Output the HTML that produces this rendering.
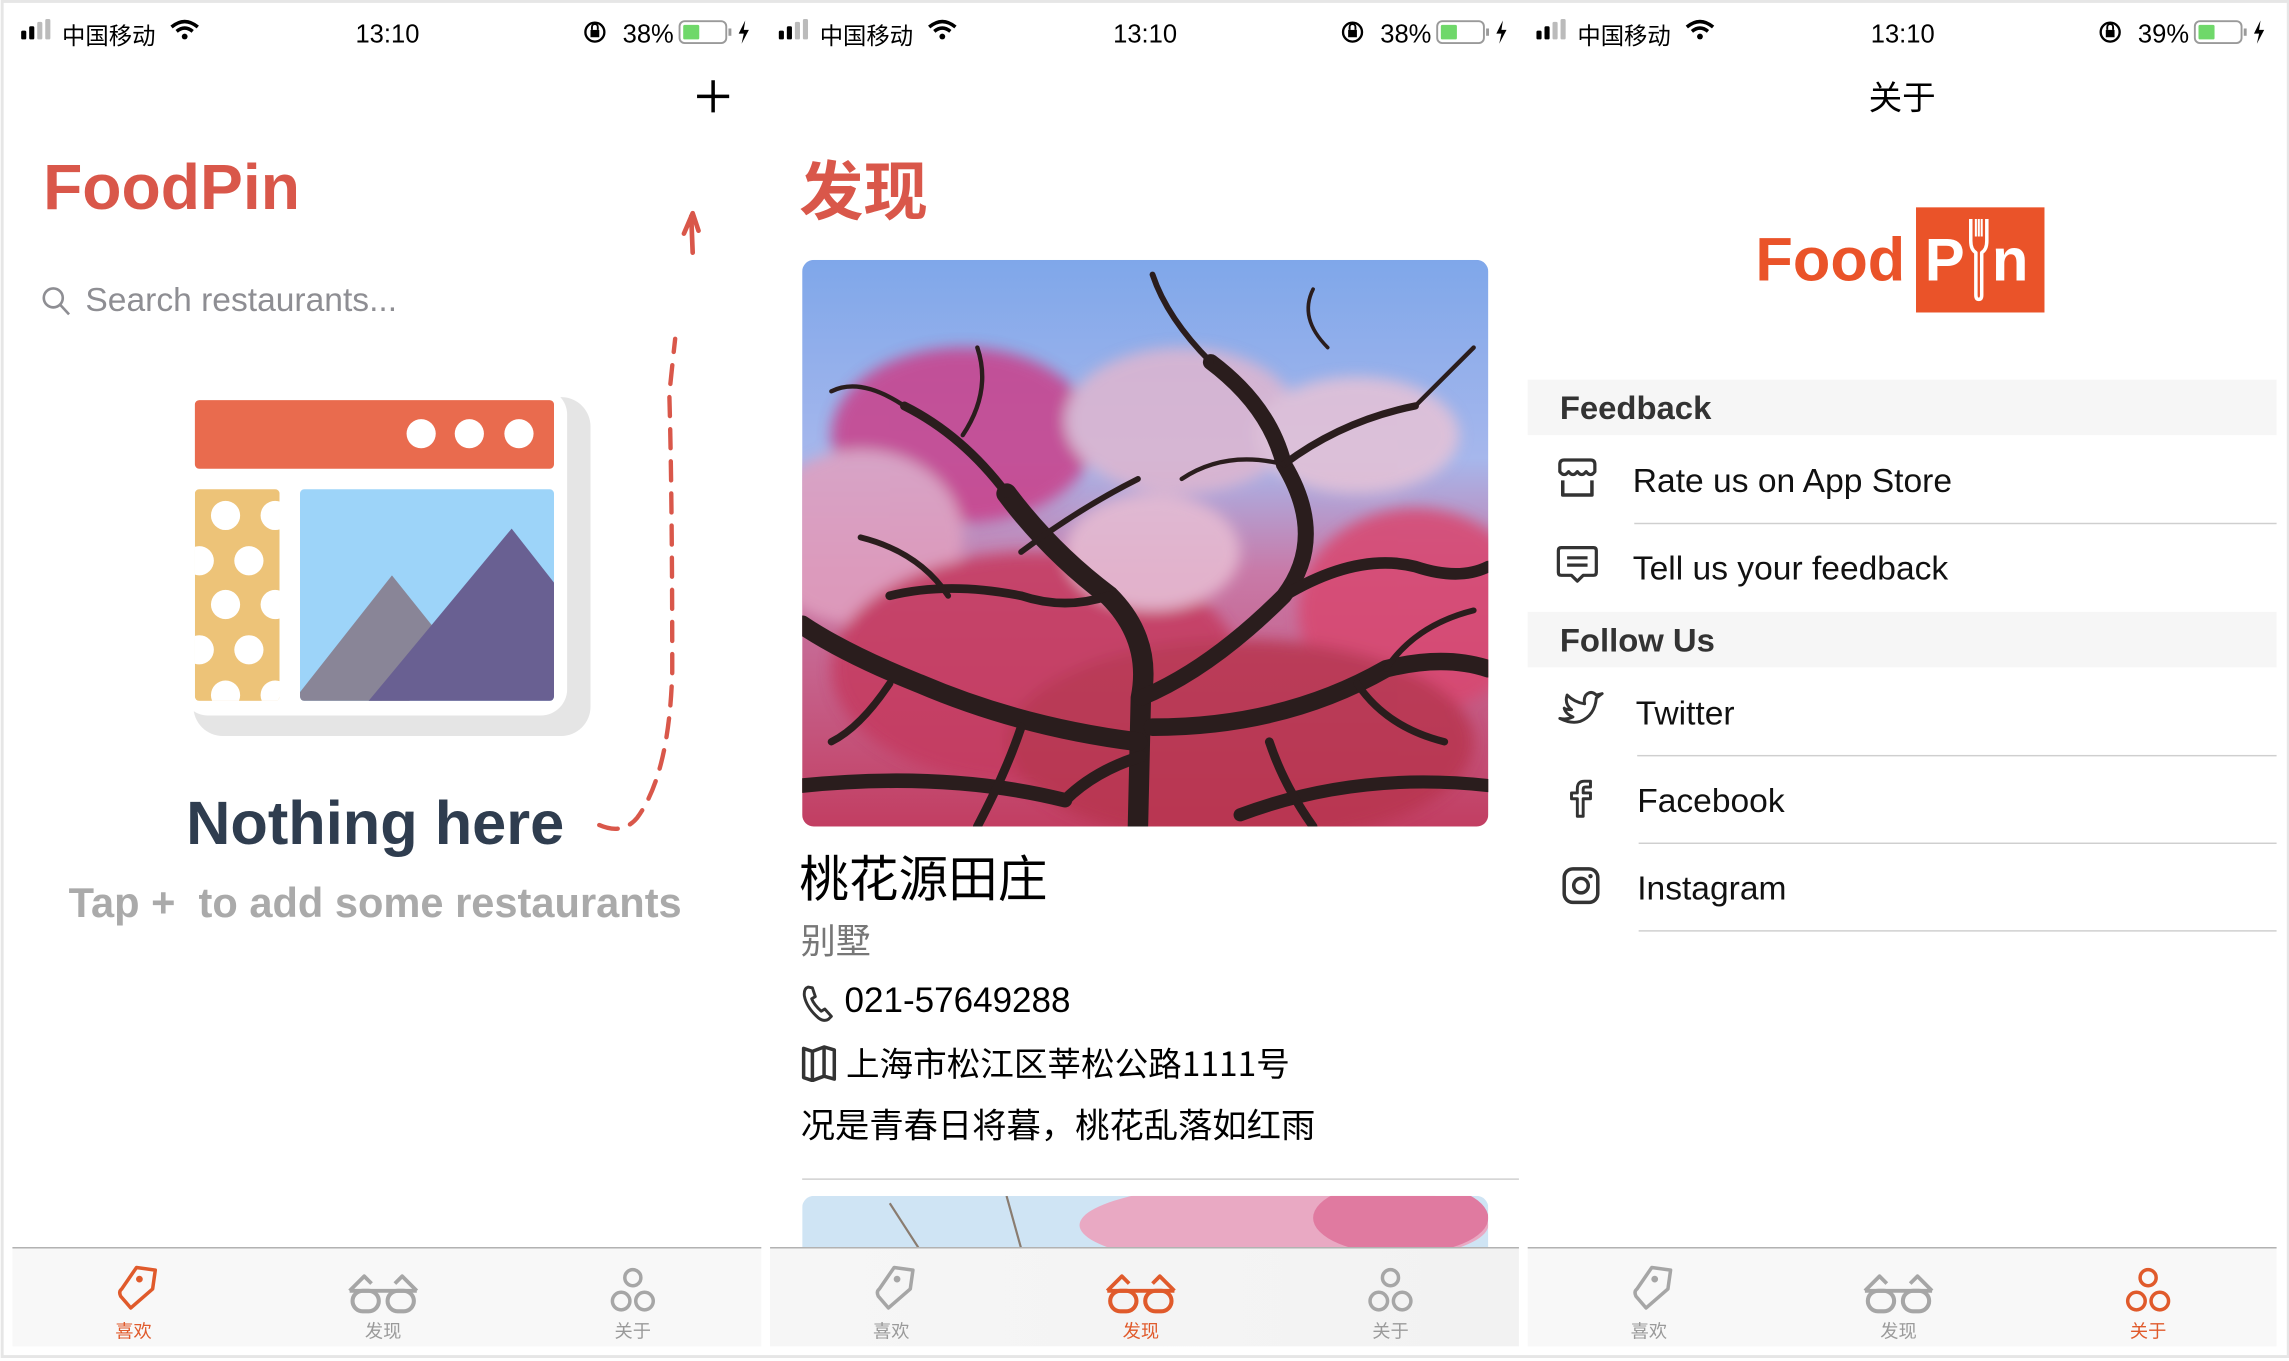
<!DOCTYPE html>
<html><head><meta charset="utf-8">
<style>
*{margin:0;padding:0;box-sizing:border-box}
html,body{width:2289px;height:1358px;overflow:hidden;background:#fff}
#w{position:absolute;left:0;top:0;width:1568px;height:930px;transform:scale(1.45982,1.46022) translate(0.5px,2px);transform-origin:0 0;font-family:"Liberation Sans","Noto Sans CJK SC",sans-serif;color:#000}
#bd{position:absolute;left:-0.5px;top:-2px;width:1568px;height:930px;border:2px solid #e6e6e6}
.a{position:absolute;white-space:nowrap}
.sb{font-size:16px;line-height:18px;top:12px}
.tab{position:absolute;top:852px;height:68px;background:#f8f8f8;border-top:1.5px solid #b0b0b0}
.tl{position:absolute;top:902px;font-size:12.5px;line-height:14px;width:40px;text-align:center;color:#9a9a9a}
.hd{position:absolute;left:1046px;width:513px;height:38px;background:#f6f6f6}
.ht{font-size:22.5px;font-weight:bold;color:#333;left:1068px}
.rt{font-size:23px;color:#111;line-height:26px}
.sep{position:absolute;height:1px;background:#cfcfcf;right:9px}
.cn{font-family:"Noto Sans CJK SC","Liberation Sans",sans-serif}
</style></head><body><div id="w">
<div id="bd"></div>

<svg class="a" style="left:-2px;top:-2px" width="1568" height="40">
<g id="sbi">
<rect x="16" y="21" width="3.5" height="6" rx="1" fill="#000"/><rect x="21.5" y="18" width="3.5" height="9" rx="1" fill="#000"/><rect x="27" y="15" width="3.5" height="12" rx="1" fill="#bbb"/><rect x="32.5" y="13" width="3.5" height="14" rx="1" fill="#bbb"/>
<path d="M119 18.5 Q128 11 137 18.5" stroke="#000" stroke-width="2.4" fill="none"/><path d="M122.5 21.5 Q128 17 133.5 21.5" stroke="#000" stroke-width="2.4" fill="none"/><circle cx="128" cy="25" r="2" fill="#000"/>
<circle cx="409" cy="22" r="6.5" stroke="#000" stroke-width="1.6" fill="none"/><rect x="406" y="20.5" width="6" height="5" fill="#000"/><path d="M407 20.5v-2a2 2 0 014 0v2" stroke="#000" stroke-width="1.3" fill="none"/>
<rect x="467" y="14.5" width="32" height="15" rx="3.5" stroke="#9a9a9a" stroke-width="1.3" fill="none"/><rect x="469.5" y="17" width="11" height="10" rx="1" fill="#6fd86a"/><rect x="500.5" y="19.5" width="2" height="5" fill="#9a9a9a"/>
<path d="M512 14 L507.5 23 H511 L509.5 30 L514.5 20.5 H511 Z" fill="#000"/>
</g>
<use href="#sbi" x="519"/><use href="#sbi" x="1038"/>
</svg>
<div class="a sb cn" style="left:42px">中国移动</div><div class="a sb" style="left:243px;font-size:17.5px">13:10</div><div class="a sb" style="left:426px;font-size:17.5px">38%</div>
<div class="a sb cn" style="left:561px">中国移动</div><div class="a sb" style="left:762px;font-size:17.5px">13:10</div><div class="a sb" style="left:945px;font-size:17.5px">38%</div>
<div class="a sb cn" style="left:1080px">中国移动</div><div class="a sb" style="left:1281px;font-size:17.5px">13:10</div><div class="a sb" style="left:1464px;font-size:17.5px">39%</div>

<!-- LEFT -->
<svg class="a" style="left:474px;top:50px" width="28" height="28"><path d="M14 3v22M3 14h22" stroke="#000" stroke-width="2.4"/></svg>
<div class="a" style="left:29px;top:101px;font-size:44px;line-height:52px;font-weight:bold;color:#d9574a">FoodPin</div>
<svg class="a" style="left:27px;top:193px" width="24" height="24"><circle cx="9" cy="9" r="6.5" stroke="#8e8e93" stroke-width="1.8" fill="none"/><path d="M13.8 13.8l6 6.5" stroke="#8e8e93" stroke-width="1.8"/></svg>
<div class="a" style="left:58px;top:189px;font-size:23px;line-height:28px;color:#8e8e93">Search restaurants...</div>

<svg class="a" style="left:118px;top:260px" width="300" height="250">
<rect x="14" y="10" width="272" height="232" rx="20" fill="#e5e5e5"/>
<rect x="6" y="4" width="264" height="224" rx="18" fill="#fff"/>
<rect x="15" y="12" width="246" height="47" rx="3" fill="#e96b4e"/>
<circle cx="170" cy="35" r="10" fill="#fff"/><circle cx="203" cy="35" r="10" fill="#fff"/><circle cx="237" cy="35" r="10" fill="#fff"/>
<clipPath id="yc"><rect x="15" y="73" width="58" height="145" rx="3"/></clipPath>
<g clip-path="url(#yc)"><rect x="15" y="73" width="58" height="145" fill="#edc378"/>
<g fill="#fff"><circle cx="36" cy="91" r="10"/><circle cx="70" cy="91" r="10"/><circle cx="18" cy="122" r="10"/><circle cx="52" cy="122" r="10"/><circle cx="36" cy="152" r="10"/><circle cx="70" cy="152" r="10"/><circle cx="18" cy="183" r="10"/><circle cx="52" cy="183" r="10"/><circle cx="36" cy="214" r="10"/><circle cx="70" cy="214" r="10"/></g></g>
<clipPath id="bc"><rect x="87" y="73" width="174" height="145" rx="3"/></clipPath>
<g clip-path="url(#bc)"><rect x="87" y="73" width="174" height="145" fill="#9dd4f9"/>
<path d="M87 212 L150 132 L182 172 L162 218 H87Z" fill="#898597"/>
<path d="M134 218 L232 100 L261 137 V218Z" fill="#696092"/></g>
</svg>

<svg class="a" style="left:398px;top:138px" width="90" height="440">
<path d="M12 425 Q28 432 38 420 Q60 390 62 320 Q62 200 60 130 Q62 110 64 92" stroke="#d9574a" stroke-width="3" fill="none" stroke-dasharray="13 9" stroke-linecap="round"/>
<path d="M76 33 L75 8 M70 20 L76 6 L80 18" stroke="#d9574a" stroke-width="3.2" fill="none" stroke-linecap="round" stroke-linejoin="round"/>
</svg>
<div class="a" style="left:0;width:513px;text-align:center;top:537px;font-size:42px;line-height:50px;font-weight:bold;color:#2f3d4f">Nothing here</div>
<div class="a" style="left:0;width:513px;text-align:center;top:600px;font-size:28.5px;line-height:34px;font-weight:bold;color:#aaa">Tap +&nbsp; to add some restaurants</div>

<!-- MIDDLE -->
<div class="a cn" style="left:547px;top:98px;font-size:44px;line-height:56px;font-weight:bold;color:#d9574a">发现</div>
<svg class="a" style="left:549px;top:176px" width="470" height="388">
<defs><clipPath id="pc"><rect width="470" height="388" rx="8"/></clipPath>
<linearGradient id="sky" x1="0" y1="0" x2="0" y2="1"><stop offset="0" stop-color="#7fa7ea"/><stop offset="0.35" stop-color="#a6b7ec"/><stop offset="0.55" stop-color="#c87aa8"/><stop offset="1" stop-color="#c23e62"/></linearGradient>
<filter id="bl"><feGaussianBlur stdDeviation="5"/></filter></defs>
<g clip-path="url(#pc)">
<rect width="470" height="388" fill="url(#sky)"/>
<g filter="url(#bl)" opacity="0.85">
<ellipse cx="110" cy="120" rx="90" ry="60" fill="#c9408a"/>
<ellipse cx="40" cy="190" rx="70" ry="60" fill="#e0a0c0"/>
<ellipse cx="260" cy="110" rx="80" ry="50" fill="#dfb6cf"/>
<ellipse cx="380" cy="120" rx="70" ry="40" fill="#e6c2d6"/>
<ellipse cx="420" cy="240" rx="80" ry="70" fill="#d84670"/>
<ellipse cx="160" cy="280" rx="140" ry="80" fill="#c53a60"/>
<ellipse cx="300" cy="330" rx="160" ry="70" fill="#b8344f"/>
<ellipse cx="240" cy="200" rx="60" ry="40" fill="#e7bdd3"/>
</g>
<g stroke="#2a1d1d" fill="none" stroke-linecap="round">
<path d="M230 388 L232 300 Q240 260 210 230 Q170 200 140 160" stroke-width="14"/>
<path d="M232 300 Q280 280 330 230 Q360 190 330 140 Q320 100 280 70" stroke-width="11"/>
<path d="M230 330 Q150 320 80 290 Q30 270 0 250" stroke-width="13"/>
<path d="M240 320 Q330 320 400 280 Q440 270 470 280" stroke-width="12"/>
<path d="M140 160 Q110 120 70 100" stroke-width="6"/>
<path d="M330 230 Q380 200 420 210 Q450 220 470 210" stroke-width="8"/>
<path d="M210 230 Q180 240 150 230 Q100 220 60 230" stroke-width="6"/>
<path d="M330 140 Q370 110 420 100" stroke-width="5"/>
<path d="M280 70 Q250 40 240 10" stroke-width="4"/>
<path d="M0 360 Q100 350 180 370" stroke-width="10"/>
<path d="M300 380 Q380 350 470 360" stroke-width="9"/>
<path d="M150 200 Q190 170 230 150" stroke-width="4"/>
<path d="M420 100 Q440 80 460 60" stroke-width="3"/>
<path d="M70 100 Q40 80 20 90" stroke-width="3"/>
<path d="M100 230 Q80 200 40 190" stroke-width="4"/>
<path d="M60 290 Q40 320 20 330" stroke-width="5"/>
<path d="M380 290 Q400 320 440 330" stroke-width="5"/>
<path d="M400 280 Q420 250 460 240" stroke-width="4"/>
<path d="M330 140 Q290 130 260 150" stroke-width="3"/>
<path d="M110 120 Q130 90 120 60" stroke-width="3"/>
<path d="M360 60 Q340 40 350 20" stroke-width="2.5"/>
<path d="M180 370 Q200 350 232 340" stroke-width="8"/>
<path d="M150 320 Q140 350 120 388" stroke-width="6"/>
<path d="M320 330 Q330 360 350 388" stroke-width="6"/>
</g>
</g></svg>
<div class="a cn" style="left:547px;top:576px;font-size:34px;line-height:44px">桃花源田庄</div>
<div class="a cn" style="left:548px;top:625px;font-size:24px;line-height:32px;color:#777">别墅</div>
<svg class="a" style="left:548px;top:671px" width="24" height="28"><path d="M5 3 Q2 4 2.5 9 Q4 17 12 24 Q16 27 19 25 L21 23 L16.5 18 L14 19.5 Q9 15 7.5 11 L10 9.5 L8 3.5Z" stroke="#333" stroke-width="2" fill="none" stroke-linejoin="round"/></svg>
<div class="a" style="left:578px;top:670px;font-size:24px;line-height:28px">021-57649288</div>
<svg class="a" style="left:548px;top:713px" width="26" height="26"><path d="M2 3 L8 5 L16 2 L23 4 V24 L16 22 L8 25 L2 23Z" stroke="#333" stroke-width="2.4" fill="none" stroke-linejoin="round"/><path d="M8 5V25M16 2V22" stroke="#333" stroke-width="2.4"/></svg>
<div class="a cn" style="left:579px;top:710px;font-size:23px;line-height:30px">上海市松江区莘松公路1111号</div>
<div class="a cn" style="left:548px;top:752px;font-size:23.5px;line-height:30px">况是青春日将暮，桃花乱落如红雨</div>
<div class="a" style="left:549px;top:805px;width:491px;height:1px;background:#cfcfcf"></div>
<svg class="a" style="left:549px;top:817px" width="470" height="35"><defs><clipPath id="p2"><rect width="470" height="60" rx="8"/></clipPath></defs><g clip-path="url(#p2)"><rect width="470" height="36" fill="#cfe4f4"/><ellipse cx="330" cy="20" rx="140" ry="30" fill="#e9a9c3"/><ellipse cx="410" cy="15" rx="60" ry="25" fill="#e07aa0"/><path d="M60 5 L80 36 M140 0 L150 36" stroke="#8a7c70" stroke-width="1.5"/></g></svg>

<!-- RIGHT -->
<div class="a cn" style="left:1046px;width:513px;text-align:center;top:49px;font-size:23px;line-height:28px">关于</div>
<div class="a" style="left:1202px;top:151px;font-size:42px;line-height:50px;font-weight:bold;color:#ea5329">Food</div>
<div class="a" style="left:1312px;top:140px;width:88px;height:72px;background:#ea5329"></div>
<div class="a" style="left:1318px;top:151px;font-size:41px;line-height:50px;font-weight:bold;color:#fff">P</div>
<div class="a" style="left:1364px;top:151px;font-size:41px;line-height:50px;font-weight:bold;color:#fff">n</div>
<svg class="a" style="left:1346px;top:145px" width="18" height="62"><path d="M3.5 3 V18 Q3.5 24 7 26 V55 Q7 58 9 58 Q11 58 11 55 V26 Q14.5 24 14.5 18 V3" stroke="#fff" stroke-width="2.4" fill="none" stroke-linejoin="round"/><path d="M7 3V15M9 3V15M11 3V15" stroke="#fff" stroke-width="1.4"/></svg>

<div class="hd" style="top:258px"></div>
<div class="a ht" style="top:265px;line-height:26px">Feedback</div>
<svg class="a" style="left:1064px;top:310px" width="34" height="32"><path d="M4 11 V6 Q4 3 7 3 H25 Q28 3 28 6 V11 Q25 15 22 11 Q19 15 16 11 Q13 15 10 11 Q7 15 4 11Z" stroke="#333" stroke-width="2.2" fill="none" stroke-linejoin="round"/><path d="M6 17 V27 H26 V17" stroke="#333" stroke-width="2.4" fill="none" stroke-linejoin="round"/></svg>
<div class="a rt" style="left:1118px;top:314px">Rate us on App Store</div>
<div class="sep" style="left:1119px;top:356px"></div>
<svg class="a" style="left:1064px;top:370px" width="34" height="32"><path d="M5 3 H27 Q29 3 29 5 V20 Q29 22 27 22 H20 L16 26 L12 22 H5 Q3 22 3 20 V5 Q3 3 5 3Z" stroke="#333" stroke-width="2.2" fill="none" stroke-linejoin="round"/><path d="M9 10H23M9 15H23" stroke="#333" stroke-width="2.2"/></svg>
<div class="a rt" style="left:1118px;top:374px">Tell us your feedback</div>
<div class="hd" style="top:417px"></div>
<div class="a ht" style="top:424px;line-height:26px">Follow Us</div>
<svg class="a" style="left:1066px;top:470px" width="34" height="30"><path d="M2 20 Q10 24 16 22 Q26 18 27 6 L31 3 L27 4 Q24 1 21 3 Q18 5 19 10 Q12 9 7 4 Q5 10 10 14 Q6 14 5 13 Q6 17 11 19 Q7 21 2 20Z" stroke="#333" stroke-width="2" fill="none" stroke-linejoin="round"/></svg>
<div class="a rt" style="left:1120px;top:473px">Twitter</div>
<div class="sep" style="left:1121px;top:515px"></div>
<svg class="a" style="left:1070px;top:530px" width="26" height="30"><path d="M10 27 V15 H6 V11 H10 V8 Q10 3 15 3 H19 V7 H15.5 Q14 7 14 8.5 V11 H19 V15 H14 V27Z" stroke="#333" stroke-width="2" fill="none" stroke-linejoin="round"/></svg>
<div class="a rt" style="left:1121px;top:533px">Facebook</div>
<div class="sep" style="left:1122px;top:575px"></div>
<svg class="a" style="left:1068px;top:590px" width="30" height="30"><rect x="3" y="3" width="23" height="23" rx="6" stroke="#333" stroke-width="2.4" fill="none"/><circle cx="14.5" cy="14.5" r="5" stroke="#333" stroke-width="2.4" fill="none"/><circle cx="21" cy="8" r="1.5" fill="#333"/></svg>
<div class="a rt" style="left:1121px;top:593px">Instagram</div>
<div class="sep" style="left:1122px;top:635px"></div>

<!-- TAB BARS -->
<div class="tab" style="left:8px;width:513px"></div>
<div class="tab" style="left:527px;width:513px;background:linear-gradient(90deg,#f6f6f6,#f2f2f2)"></div>
<div class="tab" style="left:1046px;width:513px"></div>
<svg class="a" style="left:-2px;top:861px" width="1568" height="42">
<defs>
<g id="tag"><path d="M0 0 H13 V13 L0 28 L-8 21 Q-10 18 -8 16 Z" transform="translate(95,5) rotate(8)" stroke-width="2.4" fill="none" stroke-linejoin="round"/><circle cx="97" cy="13" r="2.3" stroke="none"/></g>
<g id="gls"><path d="M241 21 L251 11 L256 16 M287 21 L277 11 L272 16 M241 21 H287" stroke-width="2.6" fill="none" stroke-linejoin="round"/><rect x="243" y="21" width="18" height="14" rx="7" stroke-width="2.8" fill="none"/><rect x="267" y="21" width="18" height="14" rx="7" stroke-width="2.8" fill="none"/></g>
<g id="cir"><circle cx="435" cy="12" r="5.5" stroke-width="2.4" fill="none"/><circle cx="427" cy="28" r="6" stroke-width="2.4" fill="none"/><circle cx="443" cy="28" r="6" stroke-width="2.4" fill="none"/></g>
</defs>
<g stroke="#e05a2b" fill="#e05a2b"><use href="#tag"/></g>
<g stroke="#a6a6a6" fill="#a6a6a6"><use href="#gls"/><use href="#cir"/></g>
<g stroke="#a6a6a6" fill="#a6a6a6"><use href="#tag" x="519"/><use href="#cir" x="519"/></g>
<g stroke="#e05a2b" fill="#e05a2b"><use href="#gls" x="519"/></g>
<g stroke="#a6a6a6" fill="#a6a6a6"><use href="#tag" x="1038"/><use href="#gls" x="1038"/></g>
<g stroke="#e05a2b" fill="#e05a2b"><use href="#cir" x="1038"/></g>
</svg>
<div class="tl cn" style="left:71px;color:#e05a2b">喜欢</div><div class="tl cn" style="left:242px">发现</div><div class="tl cn" style="left:413px">关于</div>
<div class="tl cn" style="left:590px">喜欢</div><div class="tl cn" style="left:761px;color:#e05a2b">发现</div><div class="tl cn" style="left:932px">关于</div>
<div class="tl cn" style="left:1109px">喜欢</div><div class="tl cn" style="left:1280px">发现</div><div class="tl cn" style="left:1451px;color:#e05a2b">关于</div>

</div></body></html>
